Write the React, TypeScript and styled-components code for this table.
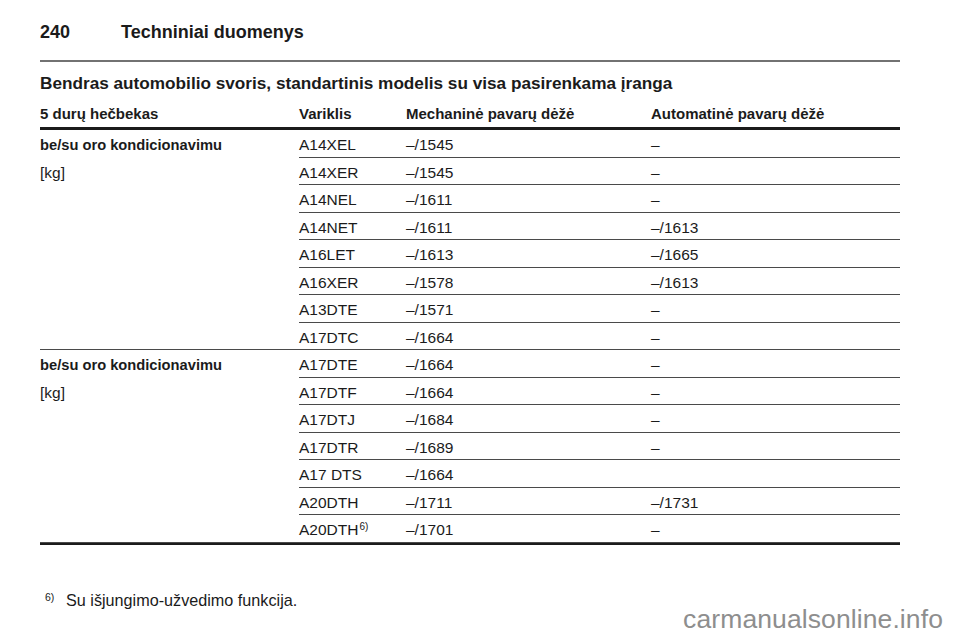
import React from "react";
import styled, { createGlobalStyle } from "styled-components";

const GlobalStyle = createGlobalStyle`
  html, body {
    margin: 0;
    padding: 0;
    background: #ffffff;
  }
  body {
    font-family: "Liberation Sans", Arial, sans-serif;
    color: #1b1b1b;
  }
`;

const Page = styled.div`
  position: relative;
  width: 960px;
  height: 642px;
  overflow: hidden;
  padding: 0 60px 0 40px;
  box-sizing: border-box;
`;

const PageHeader = styled.header`
  display: flex;
  padding-top: 22px;
  height: 38px;
  border-bottom: 2px solid #727272;
  font-size: 18px;
  font-weight: bold;
  line-height: 21px;
`;

const PageNumber = styled.span`
  width: 81px;
`;

const Title = styled.h2`
  margin: 11px 0 0;
  font-size: 17.2px;
  line-height: 20px;
  font-weight: bold;
`;

const HeadRow = styled.div`
  display: flex;
  padding: 12px 0 4px;
  border-bottom: 3px solid #1b1b1b;
  font-size: 15px;
  line-height: 18px;
  font-weight: bold;
`;

const Col = styled.div<{ $w?: number }>`
  flex: ${(p) => (p.$w ? `0 0 ${p.$w}px` : "1 1 auto")};
  white-space: nowrap;
`;

const Group = styled.div<{ $last?: boolean }>`
  display: flex;
  border-bottom: ${(p) => (p.$last ? "2px solid #1b1b1b" : "none")};
`;

const LeftCell = styled.div`
  flex: 0 0 259px;
  box-sizing: border-box;
  padding-top: 6px;
  border-bottom: 1px solid #4a4a4a;
  line-height: 18px;
`;

const Label = styled.div`
  font-size: 14.7px;
  font-weight: bold;
`;

const Unit = styled.div`
  margin-top: 9.5px;
  font-size: 15.5px;
`;

const Rows = styled.div`
  flex: 1 1 auto;
`;

const Row = styled.div`
  display: flex;
  height: 27.5px;
  box-sizing: border-box;
  padding-top: 6px;
  border-bottom: 1px solid #4a4a4a;
  font-size: 15.5px;
  line-height: 18px;
`;

const Sup = styled.sup`
  font-size: 10px;
  line-height: 0;
  vertical-align: 5px;
  margin-left: 1px;
`;

const Footnote = styled.p`
  display: flex;
  margin: 45px 0 0;
  font-size: 16.2px;
  line-height: 20px;
`;

const FootMark = styled.span`
  flex: 0 0 21px;
  padding-left: 5px;
  font-size: 10.5px;
  line-height: 14px;
`;

const Watermark = styled.div`
  position: absolute;
  right: 17px;
  bottom: 10px;
  font-size: 26.5px;
  line-height: 26px;
  letter-spacing: 0.1px;
  color: #8e8e8e;
`;

type Engine = { name: string; sup?: string; manual: string; auto: string };

const groups: Engine[][] = [
  [
    { name: "A14XEL", manual: "–/1545", auto: "–" },
    { name: "A14XER", manual: "–/1545", auto: "–" },
    { name: "A14NEL", manual: "–/1611", auto: "–" },
    { name: "A14NET", manual: "–/1611", auto: "–/1613" },
    { name: "A16LET", manual: "–/1613", auto: "–/1665" },
    { name: "A16XER", manual: "–/1578", auto: "–/1613" },
    { name: "A13DTE", manual: "–/1571", auto: "–" },
    { name: "A17DTC", manual: "–/1664", auto: "–" },
  ],
  [
    { name: "A17DTE", manual: "–/1664", auto: "–" },
    { name: "A17DTF", manual: "–/1664", auto: "–" },
    { name: "A17DTJ", manual: "–/1684", auto: "–" },
    { name: "A17DTR", manual: "–/1689", auto: "–" },
    { name: "A17 DTS", manual: "–/1664", auto: "" },
    { name: "A20DTH", manual: "–/1711", auto: "–/1731" },
    { name: "A20DTH", sup: "6)", manual: "–/1701", auto: "–" },
  ],
];

export default function App() {
  return (
    <>
      <GlobalStyle />
      <Page>
        <PageHeader>
          <PageNumber>240</PageNumber>
          <span>Techniniai duomenys</span>
        </PageHeader>

        <Title>
          Bendras automobilio svoris, standartinis modelis su visa pasirenkama
          įranga
        </Title>

        <HeadRow>
          <Col $w={259}>5 durų hečbekas</Col>
          <Col $w={107}>Variklis</Col>
          <Col $w={245}>Mechaninė pavarų dėžė</Col>
          <Col>Automatinė pavarų dėžė</Col>
        </HeadRow>

        {groups.map((g, gi) => (
          <Group key={gi} $last={gi === groups.length - 1}>
            <LeftCell>
              <Label>be/su oro kondicionavimu</Label>
              <Unit>[kg]</Unit>
            </LeftCell>
            <Rows>
              {g.map((e, i) => (
                <Row key={i}>
                  <Col $w={107}>
                    {e.name}
                    {e.sup && <Sup>{e.sup}</Sup>}
                  </Col>
                  <Col $w={245}>{e.manual}</Col>
                  <Col>{e.auto}</Col>
                </Row>
              ))}
            </Rows>
          </Group>
        ))}

        <Footnote>
          <FootMark>6)</FootMark>
          <span>Su išjungimo-užvedimo funkcija.</span>
        </Footnote>

        <Watermark>carmanualsonline.info</Watermark>
      </Page>
    </>
  );
}
